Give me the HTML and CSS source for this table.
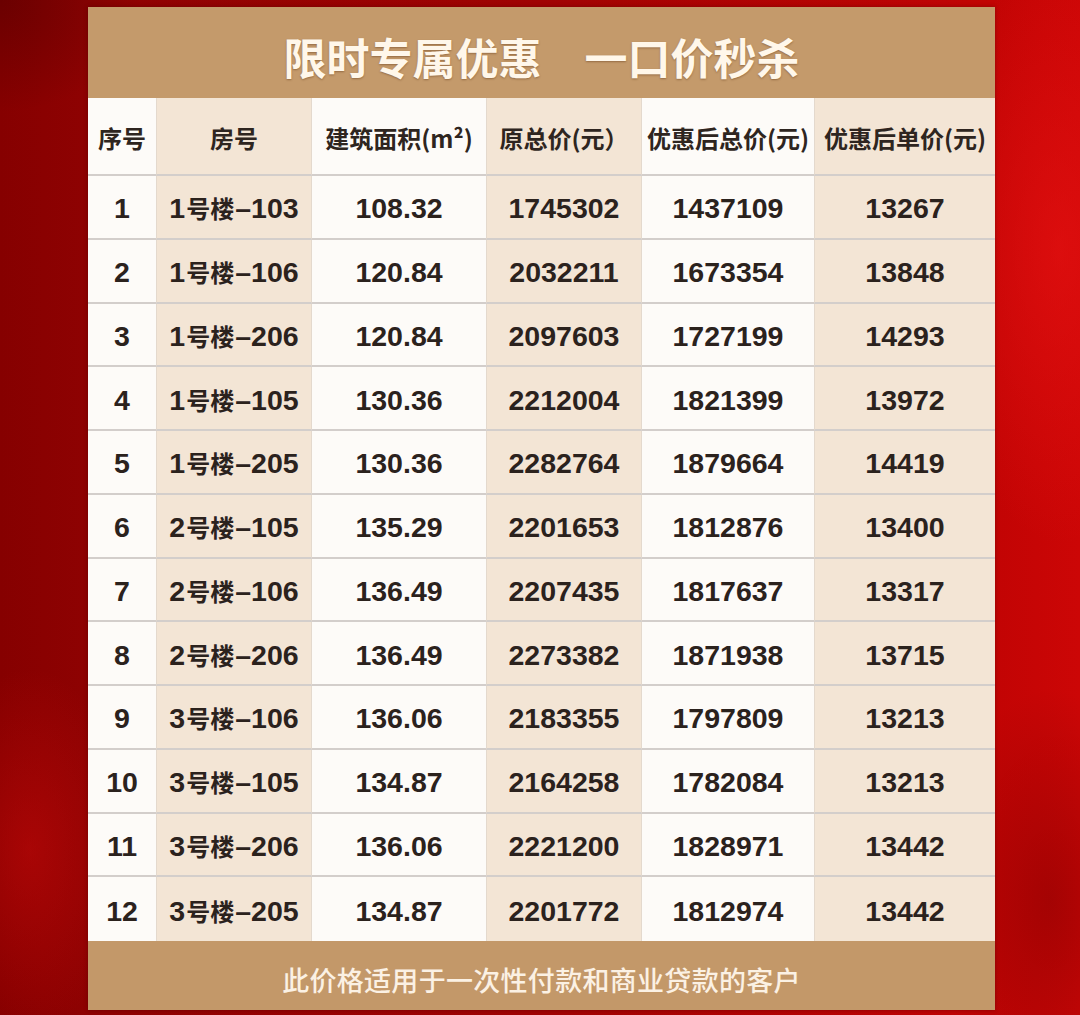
FILE: index.html
```html
<!DOCTYPE html>
<html lang="zh-CN">
<head>
<meta charset="utf-8">
<title>限时专属优惠 一口价秒杀</title>
<link rel="stylesheet" href="styles.css">
</head>
<body>
<div class="page">
  <div class="card">
    <div class="title">限时专属优惠　一口价秒杀</div>
    <div class="table">
      <div class="cell head">序号</div>
      <div class="cell head">房号</div>
      <div class="cell head">建筑面积(m²)</div>
      <div class="cell head">原总价(元）</div>
      <div class="cell head">优惠后总价(元)</div>
      <div class="cell head">优惠后单价(元)</div>

      <div class="cell">1</div><div class="cell">1<span class="cjk">号楼</span>–103</div><div class="cell">108.32</div><div class="cell">1745302</div><div class="cell">1437109</div><div class="cell">13267</div>
      <div class="cell">2</div><div class="cell">1<span class="cjk">号楼</span>–106</div><div class="cell">120.84</div><div class="cell">2032211</div><div class="cell">1673354</div><div class="cell">13848</div>
      <div class="cell">3</div><div class="cell">1<span class="cjk">号楼</span>–206</div><div class="cell">120.84</div><div class="cell">2097603</div><div class="cell">1727199</div><div class="cell">14293</div>
      <div class="cell">4</div><div class="cell">1<span class="cjk">号楼</span>–105</div><div class="cell">130.36</div><div class="cell">2212004</div><div class="cell">1821399</div><div class="cell">13972</div>
      <div class="cell">5</div><div class="cell">1<span class="cjk">号楼</span>–205</div><div class="cell">130.36</div><div class="cell">2282764</div><div class="cell">1879664</div><div class="cell">14419</div>
      <div class="cell">6</div><div class="cell">2<span class="cjk">号楼</span>–105</div><div class="cell">135.29</div><div class="cell">2201653</div><div class="cell">1812876</div><div class="cell">13400</div>
      <div class="cell">7</div><div class="cell">2<span class="cjk">号楼</span>–106</div><div class="cell">136.49</div><div class="cell">2207435</div><div class="cell">1817637</div><div class="cell">13317</div>
      <div class="cell">8</div><div class="cell">2<span class="cjk">号楼</span>–206</div><div class="cell">136.49</div><div class="cell">2273382</div><div class="cell">1871938</div><div class="cell">13715</div>
      <div class="cell">9</div><div class="cell">3<span class="cjk">号楼</span>–106</div><div class="cell">136.06</div><div class="cell">2183355</div><div class="cell">1797809</div><div class="cell">13213</div>
      <div class="cell">10</div><div class="cell">3<span class="cjk">号楼</span>–105</div><div class="cell">134.87</div><div class="cell">2164258</div><div class="cell">1782084</div><div class="cell">13213</div>
      <div class="cell">11</div><div class="cell">3<span class="cjk">号楼</span>–206</div><div class="cell">136.06</div><div class="cell">2221200</div><div class="cell">1828971</div><div class="cell">13442</div>
      <div class="cell last">12</div><div class="cell last">3<span class="cjk">号楼</span>–205</div><div class="cell last">134.87</div><div class="cell last">2201772</div><div class="cell last">1812974</div><div class="cell last">13442</div>
    </div>
    <div class="footer">此价格适用于一次性付款和商业贷款的客户</div>
  </div>
</div>
</body>
</html>
```

FILE: styles.css
```css
html, body {
  margin: 0;
  padding: 0;
}

body {
  width: 1080px;
  height: 1015px;
  overflow: hidden;
  background:
    radial-gradient(ellipse 180px 420px at 1060px 250px, rgba(235, 20, 20, 0.55), rgba(235, 20, 20, 0) 70%),
    radial-gradient(ellipse 160px 300px at 1050px 900px, rgba(120, 0, 0, 0.45), rgba(120, 0, 0, 0) 70%),
    radial-gradient(ellipse 140px 260px at 30px 850px, rgba(200, 10, 10, 0.5), rgba(200, 10, 10, 0) 70%),
    radial-gradient(ellipse 200px 160px at 0px 0px, rgba(80, 0, 0, 0.5), rgba(80, 0, 0, 0) 70%),
    linear-gradient(90deg, #860000 0%, #8e0202 8%, #a00303 50%, #c20404 92%, #cc0606 100%);
  font-family: "Liberation Sans", "Noto Sans CJK SC", sans-serif;
}

.page {
  padding: 7px 0 0 88px;
}

.card {
  width: 907px;
  display: flex;
  flex-direction: column;
  box-shadow: 0 0 4px rgba(60, 0, 0, 0.4);
}

.title {
  height: 91px;
  box-sizing: border-box;
  padding-top: 7px;
  display: flex;
  align-items: center;
  justify-content: center;
  background: #c49a6b;
  color: #fff7ea;
  font-family: "Noto Sans CJK SC", sans-serif;
  font-weight: 700;
  font-size: 43px;
  text-shadow: 0 1px 2px rgba(90, 50, 20, 0.45);
}

.table {
  display: grid;
  grid-template-columns: 69px 155px 175px 155px 173px 180px;
  grid-template-rows: 78px repeat(12, 63.75px);
}

.cell {
  display: flex;
  align-items: center;
  justify-content: center;
  box-sizing: border-box;
  padding-top: 4px;
  background: #fdfbf8;
  color: #2b221d;
  font-family: "Liberation Sans", "Noto Sans CJK SC", sans-serif;
  font-weight: 700;
  font-size: 28.5px;
  border-bottom: 2px solid #d3cecb;
  border-right: 1px solid #e4d9cd;
  white-space: nowrap;
}

.cjk {
  font-family: "Noto Sans CJK SC", sans-serif;
  font-size: 24px;
  margin: 0 1px;
  position: relative;
  top: -1px;
}

.cell:nth-child(6n+2),
.cell:nth-child(6n+4),
.cell:nth-child(6n) {
  background: #f3e5d5;
}

.cell:nth-child(6n) {
  border-right: none;
}

.cell.head {
  font-family: "Noto Sans CJK SC", sans-serif;
  font-size: 24px;
  padding-top: 2px;
  color: #2e2520;
}

.cell.last {
  border-bottom: none;
}

.footer {
  height: 69px;
  box-sizing: border-box;
  padding-top: 8px;
  display: flex;
  align-items: center;
  justify-content: center;
  background: #c39869;
  color: #fbf1e4;
  font-family: "Noto Sans CJK SC", sans-serif;
  font-weight: 500;
  font-size: 27px;
  letter-spacing: 0.3px;
}
```
